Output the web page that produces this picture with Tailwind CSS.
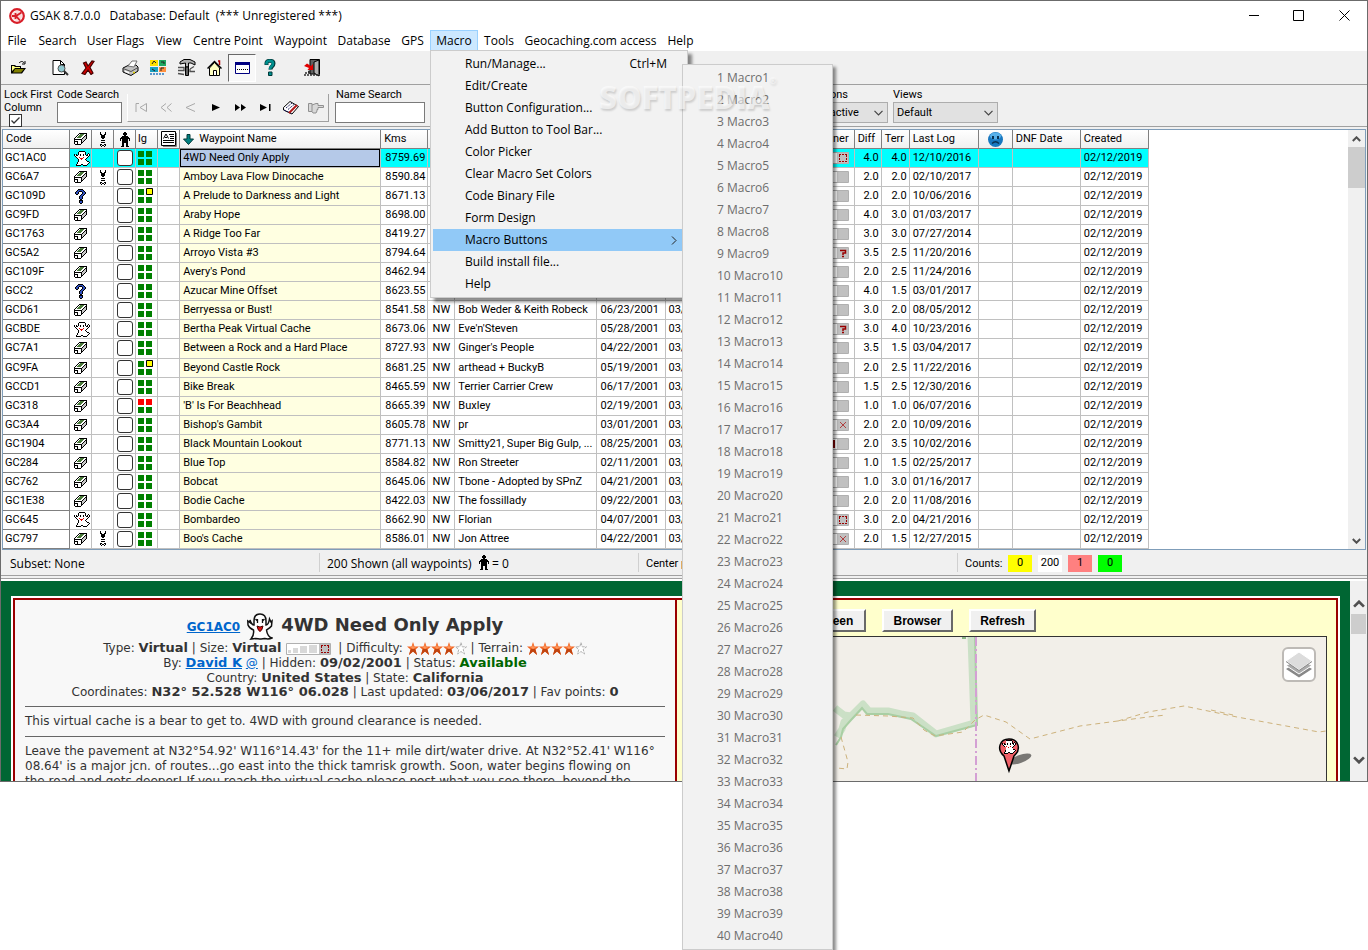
<!DOCTYPE html>
<html lang="en">
<head>
    <meta charset="UTF-8">
    <meta name="viewport" content="width=device-width, initial-scale=1.0">
    <title>GSAK 8.7.0.0</title>
    <script src="https://cdn.jsdelivr.net/npm/@tailwindcss/browser@4"></script>
</head>
<body class="min-h-screen bg-white text-black font-['Open_Sans','Noto_Sans',sans-serif] text-xs">

    <!-- Icon sprite -->
    <svg class="hidden">
        <symbol id="i-box" viewBox="0 0 13 12"></symbol>
        <symbol id="i-ghost" viewBox="0 0 16 15"></symbol>
        <symbol id="i-quest" viewBox="0 0 11 15"></symbol>
        <symbol id="i-bug" viewBox="0 0 6 15"></symbol>
        <symbol id="i-man" viewBox="0 0 10 15"></symbol>
        <symbol id="i-notes" viewBox="0 0 16 16">
            <path d="M2 15.500H15.500V2" fill="none" stroke="#808080"/>
            <path d="M.5 .5H14.500V14.500H.5Z" fill="#fff" stroke="#000"/>
            <path d="M2.500 7.500L5 3L7.500 7.500M4 6.500H6M8 3.500H13M9 5.500H13M9 7.500H13M2 9.500H13M2 11.500H13" fill="none" stroke="#000"/>
        </symbol>
        <symbol id="i-arrow" viewBox="0 0 11 11">
            <path d="M4 .5H7V5H10.500L5.500 10.500L.5 5H4Z" fill="#008080" stroke="#003838"/>
        </symbol>
        <symbol id="i-star" viewBox="0 0 12 13">
            <path d="M6 0L7.500 4.500H12L8.500 7.500L10 13L6 9.500L2 13L3.500 7.500L0 4.500H4.500Z" fill="#f26522"/>
            <path d="M6 6V9.500L2 13L3.500 7.500ZM6 6L8.500 7.500L10 13L6 9.500Z" fill="#c04410"/>
            <path d="M6 2L6.800 5.300L9.500 5.300L6 7L3 5.300H5Z" fill="#ff9a60"/>
        </symbol>
        <symbol id="i-staroff" viewBox="0 0 12 13">
            <path d="M6 .5L7.200 4.800H11.500L8.200 7.500L9.500 12L6 9.500L2.500 12L3.800 7.500L.5 4.800H4.800Z" fill="#fff" stroke="#b0b0b0" stroke-dasharray="3 1"/>
        </symbol>
        <symbol id="i-up" viewBox="0 0 9 6"><path d="M.8 5L4.500 1.300L8.200 5" fill="none" stroke="#505050" stroke-width="2"/></symbol>
        <symbol id="i-down" viewBox="0 0 9 6"><path d="M.8 1L4.500 4.700L8.200 1" fill="none" stroke="#505050" stroke-width="2"/></symbol>
        <symbol id="i-chev" viewBox="0 0 9 6"><path d="M.5 .8L4.500 4.800L8.500 .8" fill="none" stroke="#444" stroke-width="1.200"/></symbol>
    </svg>

    <!-- Application window -->
    <div class="relative border border-[#6b6b6b] bg-[#f0f0f0]">

        <!-- Title bar -->
        <header class="flex items-center h-[29px] bg-white pl-2">
            <svg class="size-4 mr-[5px]" viewBox="0 0 16 16">
                <circle cx="8" cy="8" r="6.800" fill="#fff" stroke="#d81e28" stroke-width="2.200"/>
                <circle cx="8" cy="8" r="5" fill="#f9dada"/>
                <path d="M12.500 4.500L7 8L11 12.500M6.500 5V11M3 8H6" fill="none" stroke="#d81e28" stroke-width="1.800"/>
            </svg>
            <h1 class="whitespace-pre">GSAK 8.7.0.0   Database: Default  (*** Unregistered ***)</h1>
            <div class="ml-auto flex h-full">
                <button aria-label="Minimize" class="w-[45px] flex items-center justify-center"><svg class="w-[11px] h-[11px]" viewBox="0 0 11 11"><path d="M1 5.500H11" stroke="#000"/></svg></button>
                <button aria-label="Maximize" class="w-[45px] flex items-center justify-center"><svg class="w-[11px] h-[11px]" viewBox="0 0 11 11"><path d="M.5 .5H10.500V10.500H.5Z" fill="none" stroke="#000"/></svg></button>
                <button aria-label="Close" class="w-[46px] flex items-center justify-center"><svg class="w-[11px] h-[11px]" viewBox="0 0 11 11"><path d="M.5 .5L10.500 10.500M10.500 .5L.5 10.500" stroke="#000"/></svg></button>
            </div>
        </header>

        <!-- Menu bar -->
        <nav class="flex h-[21px] bg-white leading-[21px] whitespace-nowrap">
            <button class="w-8 text-center">File</button>
            <button class="w-[49px] text-center">Search</button>
            <button class="w-[67px] text-center">User Flags</button>
            <button class="w-[39px] text-center">View</button>
            <button class="w-20 text-center">Centre Point</button>
            <button class="w-[65px] text-center">Waypoint</button>
            <button class="w-[62px] text-center">Database</button>
            <button class="w-[35px] text-center">GPS</button>
            <button class="w-12 text-center bg-[#cce8ff] border border-[#99d1ff] leading-[19px]">Macro</button>
            <button class="w-[42px] text-center">Tools</button>
            <button class="w-[141px] text-center">Geocaching.com access</button>
            <button class="w-[39px] text-center">Help</button>
        </nav>

        <!-- Tool bar -->
        <div class="flex items-center h-[34px] pl-[3px] border-b border-[#a0a0a0]">
            <button aria-label="Open" class="w-7 flex justify-center">
                <svg class="w-[17px] h-[15px]" viewBox="0 0 17 15"><path d="M1 13V5H5L6 6H11V8H16L12 13.500H1Z" fill="#000"/><path d="M2 11V6H4L5 7H10V8H5Z" fill="#ffff80"/><path d="M5 9H14L11 12.500H3Z" fill="#808000"/><path d="M9 3C11 1 13 1 14 3M15 1V4H12" fill="none" stroke="#000"/></svg>
            </button>
            <button aria-label="Search" class="w-7 ml-[14px] flex justify-center">
                <svg class="w-[17px] h-4" viewBox="0 0 17 16"><path d="M1 .5H8.500L12.500 4.500V14.500H1Z" fill="#fff" stroke="#000"/><path d="M8.500 .5V4.500H12.500" fill="none" stroke="#000"/><circle cx="9.500" cy="8.500" r="3.500" fill="#90c8d0" stroke="#505050"/><path d="M12 11L16 15" stroke="#303030" stroke-width="2"/></svg>
            </button>
            <button aria-label="Delete" class="w-7 flex justify-center">
                <svg class="w-[14px] h-[15px]" viewBox="0 0 14 15"><path d="M2.500 3L5 2L7 6L11 1L13 1.500L9 7.500L12 13L10 14.500L7 10L4 14.500L1 13.500L5 8Z" fill="#d00000" stroke="#400" stroke-width="1.200"/></svg>
            </button>
            <button aria-label="Print" class="w-7 ml-[14px] flex justify-center">
                <svg class="w-[17px] h-4" viewBox="0 0 17 16"><path d="M1 8L7 5H14L16 7V11L9 15.500L1 12Z" fill="#c0c0c0" stroke="#000"/><path d="M6 6L10 1H15L12 7Z" fill="#fff" stroke="#707070"/><path d="M1 8.500L9 11.500L16 7.500" fill="none" stroke="#505050"/><path d="M3 10.500L7 12V13.500L3 12Z" fill="#fff"/><path d="M11 12.500H13" stroke="#e0d000" stroke-width="1.500"/></svg>
            </button>
            <button aria-label="Waypoints" class="w-7 flex justify-center">
                <svg class="w-4 h-[15px]" viewBox="0 0 16 15"><path d="M0 0H8V6H0Z" fill="#ffe000"/><path d="M9 0H16V6H9Z" fill="#20a860"/><path d="M0 7H8V12H0Z" fill="#18a0c0"/><path d="M9 7H16V12H9Z" fill="#ff9040"/><path d="M2 4L4 1L6 3M11 2H14V4M2 9L5 11M11 11V8H14" fill="none" stroke="#222"/><path d="M0 14H15" stroke="#2878c0" stroke-width="1.500" stroke-dasharray="2 1"/></svg>
            </button>
            <button aria-label="Settings" class="w-7 flex justify-center">
                <svg class="w-[19px] h-[17px]" viewBox="0 0 19 17"><path d="M3 3L7 .5H13L18 3V6L14 4H11.500V8H8.500V4L3 5Z" fill="#b0b0b0" stroke="#000"/><path d="M8.500 8H11.500V16.500H8.500Z" fill="#606060" stroke="#000"/><path d="M1 8.500H7V11.500H1M13 10L17 7.500M13 10V12.500H18M1 14.500L7 15.500" fill="none" stroke="#505050" stroke-width="1.300"/></svg>
            </button>
            <button aria-label="Home" class="w-7 flex justify-center">
                <svg class="w-[15px] h-4" viewBox="0 0 15 16"><path d="M2.500 8V15.500H12.500V8L7.500 2.500Z" fill="#ffffc0" stroke="#000"/><path d="M.5 8.500L7.500 1.500L14.500 8.500" fill="none" stroke="#000" stroke-width="1.500"/><path d="M11 1H12.500V5" fill="none" stroke="#b00000" stroke-width="1.500"/><path d="M6.500 10.500H9.500V15.500H6.500Z" fill="#fff" stroke="#000"/></svg>
            </button>
            <button aria-label="Split screen" class="w-7 h-7 flex items-center justify-center bg-[#f8f8f8] border border-l-[#696969] border-t-[#696969] border-r-white border-b-white">
                <svg class="w-[15px] h-3" viewBox="0 0 15 12"><path d="M.5 .5H14.500V11.500H.5Z" fill="#fff" stroke="#000080"/><path d="M0 0H15V3H0Z" fill="#000080"/><path d="M2 7.500H13" stroke="#000" stroke-dasharray="1 1"/></svg>
            </button>
            <button aria-label="Help" class="w-7 flex justify-center">
                <svg class="w-3 h-[17px]" viewBox="0 0 12 17"><path d="M2.500 6V4C2.500 1 9.500 1 9.500 4.500C9.500 7.500 6.500 7 6.500 10.500" fill="none" stroke="#003838" stroke-width="4"/><path d="M2.500 5.500V4C2.500 1 9 1 9 4.500C9 7.500 6 7 6 10.500" fill="none" stroke="#009090" stroke-width="2.600"/><path d="M4.500 13H8V16.500H4.500Z" fill="#009090" stroke="#003838"/></svg>
            </button>
            <button aria-label="Exit" class="w-7 ml-[14px] flex justify-center">
                <svg class="w-[18px] h-[18px]" viewBox="0 0 18 18"><path d="M7 .5H16.500V15H7Z" fill="#606060" stroke="#000"/><path d="M11 3L16 1V17L11 14Z" fill="#b0b0b0" stroke="#000"/><path d="M1 7L4 4.500L8 7L10 5V11H4.500L6 9Z" fill="#e00000"/><path d="M1 16H17M2 14H8M5 12.500H8" stroke="#303030" stroke-width="1.500" stroke-dasharray="2 1"/></svg>
            </button>
        </div>

        <!-- Search row -->
        <div class="flex h-[42px] pl-[3px] border-b border-[#a0a0a0] font-['Roboto',sans-serif] text-[11px] leading-[13px]">
            <label class="w-[53px] pt-[3px]">Lock First<br>Column
                <span class="relative block ml-[5px] size-[13px]">
                    <input type="checkbox" checked class="block appearance-none size-[13px] bg-white border border-[#333]">
                    <svg class="absolute top-0 left-0 size-[13px] pointer-events-none" viewBox="0 0 13 13"><path d="M2.500 6.500L5 9L10.500 3.500" fill="none" stroke="#333" stroke-width="1.300"/></svg>
                </span>
            </label>
            <div class="w-[70px]">
                <label for="codeSearch" class="block pt-[3px]">Code Search</label>
                <input id="codeSearch" type="text" class="block mt-[1px] w-[65px] h-[21px] bg-white border border-[#7a7a7a]">
            </div>
            <div class="flex self-start mt-[9px] h-[28px] w-[202px] items-center border-b border-r border-[#a0a0a0] border-l border-l-white">
                <button aria-label="First" class="w-[25px] flex justify-center"><svg class="w-3 h-[9px]" viewBox="0 0 12 9"><path d="M1 9V.5H4M11.500 .5V8.500L5 4.500Z" fill="none" stroke="#a8a8a8"/></svg></button>
                <button aria-label="Back page" class="w-[25px] flex justify-center"><svg class="w-3 h-[9px]" viewBox="0 0 12 9"><path d="M6 .5L1 4.500L6 8.500M11.500 .5L7 4.500L11.500 8.500" fill="none" stroke="#a8a8a8"/></svg></button>
                <button aria-label="Back" class="w-[25px] flex justify-center"><svg class="w-3 h-[9px]" viewBox="0 0 12 9"><path d="M10 .5L1 4.500L10 8.500" fill="none" stroke="#a8a8a8"/></svg></button>
                <button aria-label="Next" class="w-[25px] flex justify-center"><svg class="w-2 h-[7px]" viewBox="0 0 8 7"><path d="M0 0L8 3.500L0 7Z"/></svg></button>
                <button aria-label="Next page" class="w-[25px] flex justify-center"><svg class="w-[11px] h-[7px]" viewBox="0 0 11 7"><path d="M0 0L5 3.500L0 7ZM6 0L11 3.500L6 7Z"/></svg></button>
                <button aria-label="Last" class="w-[25px] flex justify-center"><svg class="w-[11px] h-[7px]" viewBox="0 0 11 7"><path d="M0 0L7 3.500L0 7ZM9 0H10.500V7H9Z"/></svg></button>
                <button aria-label="Bookmark" class="w-[25px] flex justify-center"><svg class="w-4 h-[14px]" viewBox="0 0 16 14"><path d="M.5 6.500L7 .5L15.500 5.500L9 13L.5 9Z" fill="#fff" stroke="#000"/><path d="M3 7L9 2M5 8.500L11 3.500M1 9L9 12.500" stroke="#202060" stroke-dasharray="2 1"/><path d="M6 12L14 4" stroke="#b01818" stroke-width="2"/></svg></button>
                <button aria-label="Go to" class="w-[25px] flex justify-center"><svg class="w-4 h-3" viewBox="0 0 16 12"><path d="M.5 1.500H4V9.500H.5ZM4 3L8 1.500H10V3.500H15.500V5.500H10V7.500H9V9L8 11H5L4 9.500" fill="#d8d8d8" stroke="#909090"/></svg></button>
            </div>
            <div class="w-[94px] ml-[6px]">
                <label for="nameSearch" class="block pt-[3px] pl-px">Name Search</label>
                <input id="nameSearch" type="text" class="block mt-[1px] w-[90px] h-[21px] bg-white border border-[#7a7a7a]">
            </div>
            <div class="ml-[368px] w-24">
                <label for="selections" class="block pt-[3px]">Selections</label>
                <div class="relative w-[91px] mt-[1px]">
                    <select id="selections" class="block appearance-none w-full h-[21px] pl-[3px] bg-[#e1e1e1] border border-[#adadad]"><option>None active</option></select>
                    <svg class="absolute right-[5px] top-2 w-[9px] h-1.5 pointer-events-none"><use href="#i-chev"/></svg>
                </div>
            </div>
            <div>
                <label for="views" class="block pt-[3px]">Views</label>
                <div class="relative w-[105px] mt-[1px]">
                    <select id="views" class="block appearance-none w-full h-[21px] pl-[3px] bg-[#e1e1e1] border border-[#adadad]"><option>Default</option></select>
                    <svg class="absolute right-[5px] top-2 w-[9px] h-1.5 pointer-events-none"><use href="#i-chev"/></svg>
                </div>
            </div>
        </div>

        <!-- Waypoint grid -->
        <div class="flex mt-[2px] mx-px h-[421px] bg-white border border-[#7f9db9] overflow-hidden">
            <table class="table-fixed w-[1146px] shrink-0 border-separate border-spacing-0 font-['Roboto',sans-serif] text-[11px] leading-[18px] whitespace-nowrap">
                <colgroup>
                    <col class="w-[67px]"><col class="w-[22px]"><col class="w-[22px]"><col class="w-[22px]"><col class="w-[22px]"><col class="w-[22px]">
                    <col class="w-[201px]"><col class="w-[47px]"><col class="w-[27px]"><col class="w-[142px]"><col class="w-[68px]"><col class="w-[68px]">
                    <col class="w-[121px]"><col class="w-[27px]"><col class="w-[28px]"><col class="w-[69px]"><col class="w-[34px]"><col class="w-[68px]"><col class="w-[68px]">
                </colgroup>
                <thead>
                    <tr class="h-[19px] text-left *:p-0 *:font-normal *:border-b *:border-r *:border-[#808080] *:bg-linear-to-b *:from-white *:to-[#f0f0f0] *:leading-[18px]">
                        <th><span class="pl-[3px]">Code</span></th>
                        <th aria-label="Type"><svg class="mx-auto w-[13px] h-3"><use href="#i-box"/></svg></th>
                        <th aria-label="Travel bug"><svg class="mx-auto w-1.5 h-[15px]"><use href="#i-bug"/></svg></th>
                        <th aria-label="User flag"><svg class="mx-auto w-[10px] h-[15px]"><use href="#i-man"/></svg></th>
                        <th><span class="pl-0.5">lg</span></th>
                        <th aria-label="Notes"><svg class="mx-auto size-4"><use href="#i-notes"/></svg></th>
                        <th><span class="flex items-center gap-[5px] pl-[3px]"><svg class="size-[11px]"><use href="#i-arrow"/></svg>Waypoint Name</span></th>
                        <th><span class="pl-[3px]">Kms</span></th>
                        <th></th><th></th><th></th><th></th>
                        <th><span class="block text-right pr-[5px]">Container</span></th>
                        <th><span class="pl-[3px]">Diff</span></th>
                        <th><span class="pl-[3px]">Terr</span></th>
                        <th><span class="pl-[3px]">Last Log</span></th>
                        <th aria-label="DNF"><svg class="mx-auto size-[15px]" viewBox="0 0 15 15"><circle cx="7.500" cy="7.500" r="7.500" fill="#1878c0"/><ellipse cx="7.500" cy="4" rx="5.500" ry="3.500" fill="#58b0e8"/><path d="M4 4H6V7H4ZM9 4H11V7H9Z" fill="#083050"/><path d="M4 11.500Q7.500 8 11 11.500" fill="none" stroke="#083050" stroke-width="1.300"/></svg></th>
                        <th><span class="pl-[3px]">DNF Date</span></th>
                        <th><span class="pl-[3px]">Created</span></th>
                    </tr>
                </thead>
                <tbody id="waypoints"></tbody>
            </table>
            <div class="ml-auto w-[17px] flex flex-col bg-[#f0f0f0]">
                <button aria-label="Scroll up" class="h-[17px] flex items-center justify-center"><svg class="w-[9px] h-1.5"><use href="#i-up"/></svg></button>
                <div class="h-[41px] bg-[#cdcdcd]"></div>
                <button aria-label="Scroll down" class="mt-auto h-[17px] flex items-center justify-center"><svg class="w-[9px] h-1.5"><use href="#i-down"/></svg></button>
            </div>
        </div>

        <!-- Status bar -->
        <div class="flex h-[26px] py-[3px] border-b border-[#a0a0a0] leading-[22px] whitespace-nowrap">
            <div class="w-[319px] pl-[9px] border-r border-[#d0d0d0]">Subset: None</div>
            <div class="w-[319px] pl-[7px] border-r border-[#d0d0d0] flex leading-[22px]"><span class="w-[152px]">200 Shown (all waypoints)</span><svg class="w-[10px] h-[15px] mt-0.5"><use href="#i-man"/></svg><span class="ml-[3px]">= 0</span></div>
            <div class="w-[319px] pl-[7px] border-r border-[#d0d0d0] leading-[22px] font-['Roboto',sans-serif] text-[11px]">Center point</div>
            <div class="flex pl-[7px] pt-0.5 font-['Roboto',sans-serif] text-[11px] leading-[18px]">
                <span class="w-[43px]">Counts:</span>
                <span class="w-6 h-[17px] leading-4 text-center bg-[#ffff00]">0</span>
                <span class="w-6 h-[17px] leading-4 text-center ml-1.5 bg-white">200</span>
                <span class="w-6 h-[17px] leading-4 text-center ml-1.5 bg-[#ff8080]">1</span>
                <span class="w-6 h-[17px] leading-4 text-center ml-1.5 bg-[#00ff00]">0</span>
            </div>
        </div>
        <div class="h-[3px] mt-0.5 bg-white border-t border-[#a0a0a0]"></div>

        <!-- Split screen detail pane -->
        <div class="flex h-[200px] overflow-hidden font-['DejaVu_Sans',sans-serif] text-[#333]">
            <div class="flex-1 min-w-0 bg-[#006633] pt-[15px] px-[10px]">
                <div class="flex border-2 border-b-0 border-white h-full">
                    <article class="w-[664px] shrink-0 bg-[#f8f8f8] border-2 border-b-0 border-[#990000] px-[10px] pt-[9px] text-xs leading-[15px] whitespace-nowrap">
                        <div class="text-center [&_b]:text-[13px] [&_b]:leading-[14px]">
                            <h2 class="flex items-center justify-center h-8 text-[18px] leading-8 font-bold">
                                <a href="#" class="text-xs text-[#0066cc] underline mt-1">GC1AC0</a>
                                <svg class="w-[26px] h-[27px] ml-[7px] mr-2 mt-0.5" viewBox="0 0 26 27">
                                    <path d="M7 8C7 3 9 1 13 1S19 3 19 8L19 12C21 12 22 9 22.500 6L24 9L25 8L24.500 13C23 15 21 16 19.500 17C20 21 22 24 25 25C22 26.500 20 26 17.500 25.500C14 26.500 11 25.500 8.500 25.500L4 26C6.500 23 7 20 6.500 17C4 16 2 14.500 1 12L.8 8L3 9.500V7C4 10 5 12 7 12Z" fill="#fff" stroke="#111" stroke-width="1.500"/>
                                    <path d="M10.500 6V10M15.500 6V10M8.500 6L10.500 8M17.500 6L15.500 8" stroke="#111" stroke-width="1.300"/>
                                    <path d="M10 13Q13 15 16 13Q15 18 13 18.500Q11 18 10 13Z" fill="#e01010" stroke="#400"/>
                                </svg>4WD Need Only Apply
                            </h2>
                            <p class="flex items-center justify-center h-[15px]">
                                <span>Type: <b>Virtual</b> | Size: <b>Virtual</b></span>
                                <svg class="w-[45px] h-3 mx-1" viewBox="0 0 45 12"><path d="M.5 .5H44.500V11.500H.5Z" fill="#fff" stroke="#b0b0b0"/><path d="M2 7H5V10H2ZM7 5H12V10H7ZM14 3H21V10H14ZM23 2H31V10H23Z" fill="#d8d8d8"/><path d="M33 1H44V11H33Z" fill="#c0c0c0"/><path d="M35 2.500H43M35 9.500H43M35.500 3V9M42.500 3V9" fill="none" stroke="#990000" stroke-dasharray="2 1"/></svg>
                                <span>&nbsp;| Difficulty:&nbsp;</span>
                                <svg class="w-3 h-[13px]"><use href="#i-star"/></svg><svg class="w-3 h-[13px]"><use href="#i-star"/></svg><svg class="w-3 h-[13px]"><use href="#i-star"/></svg><svg class="w-3 h-[13px]"><use href="#i-star"/></svg><svg class="w-3 h-[13px]"><use href="#i-staroff"/></svg>
                                <span>&nbsp;| Terrain:&nbsp;</span>
                                <svg class="w-3 h-[13px]"><use href="#i-star"/></svg><svg class="w-3 h-[13px]"><use href="#i-star"/></svg><svg class="w-3 h-[13px]"><use href="#i-star"/></svg><svg class="w-3 h-[13px]"><use href="#i-star"/></svg><svg class="w-3 h-[13px]"><use href="#i-staroff"/></svg>
                            </p>
                            <p>By: <a href="#" class="text-[#0066cc] underline"><b>David K</b></a> <a href="#" class="text-[#0066cc] underline">@</a> | Hidden: <b>09/02/2001</b> | Status: <b class="text-[#006600]">Available</b></p>
                            <p class="leading-[14px]">Country: <b>United States</b> | State: <b>California</b></p>
                            <p>Coordinates: <b>N32° 52.528 W116° 06.028</b> | Last updated: <b>03/06/2017</b> | Fav points: <b>0</b></p>
                        </div>
                        <p class="mt-1.5 py-[7px] border-t border-[#666]">This virtual cache is a bear to get to. 4WD with ground clearance is needed.</p>
                        <p class="py-[7px] border-t border-[#666]">Leave the pavement at N32°54.92' W116°14.43' for the 11+ mile dirt/water drive. At N32°52.41' W116°<br>08.64' is a major jcn. of routes...go east into the thick tamrisk growth. Soon, water begins flowing on<br>the road and gets deeper! If you reach the virtual cache please post what you see there, beyond the</p>
                    </article>
                    <section class="flex-1 min-w-0 bg-[#ffffcc] border-t-2 border-r-2 border-[#990000] px-[9px] pt-[9px]">
                        <div class="flex justify-end gap-4 pr-[291px] font-['Liberation_Sans',sans-serif] font-bold text-xs text-black">
                            <button class="w-[90px] h-[23px] text-center bg-[#f0f0f0] border-2 border-t-white border-l-white border-b-[#696969] border-r-[#696969]">Full Screen</button>
                            <button class="w-[71px] h-[23px] text-center bg-[#f0f0f0] border-2 border-t-white border-l-white border-b-[#696969] border-r-[#696969]">Browser</button>
                            <button class="w-[67px] h-[23px] text-center bg-[#f0f0f0] border-2 border-t-white border-l-white border-b-[#696969] border-r-[#696969]">Refresh</button>
                        </div>
                        <div class="relative mt-1 h-[160px] bg-[#f2efe9] border border-[#333] overflow-hidden">
                            <svg class="absolute top-0 right-0 w-[493px] h-[145px]" viewBox="0 0 493 145" fill="none">
                                <path d="M138 0L141 86L103 97L80 79L68 77L55 74L36 74L30 67L18 79L11 78L2 71M18 79L11 85L9 92L4 100" stroke="#cbe0c6" stroke-width="7" stroke-linejoin="round"/>
                                <path d="M142 0L144 88L103 99L78 82L55 77L34 77L29 71L18 83L10 92L8 100L3 108" stroke="#a9cfa4" stroke-width="2"/>
                                <path d="M143 0V145" stroke="#d4a0d4" stroke-width="2" stroke-dasharray="9 3 2 3"/>
                                <path d="M23 78L55 79L80 81L91 93L102 99L130 95L142 83L151 78L173 85L197 102L247 89L315 80L333 78M285 84L315 75L351 69L404 80L486 95L493 94M8 100L15 125L14 132L4 131M378 73L400 78" stroke="#cdb27c" stroke-dasharray="5 4"/>
                                <path d="M129 1H133" stroke="#208020"/>
                                <ellipse cx="187" cy="122" rx="12" ry="4" transform="rotate(-20 187 122)" fill="#000" opacity=".5"/>
                                <path d="M176 134L171 119C163 112 167 102 176 102S189 112 181 119Z" fill="#f06068" stroke="#000" stroke-width="1.500"/>
                                <svg x="169" y="103" width="14" height="14"><use href="#i-ghost"/></svg>
                            </svg>
                            <button aria-label="Layers" class="absolute top-[10px] right-[10px] w-[34px] h-[35px] flex items-center justify-center bg-white border-2 border-[#bdbab6] rounded-md">
                                <svg class="w-[26px] h-[26px]" viewBox="0 0 26 26"><path d="M0 17L13 25.500L26 17L21 14H5Z" fill="#888"/><path d="M0 13.500L13 22L26 13.500L21 11H5Z" fill="#aaa" stroke="#fff"/><path d="M0 9L13 18L26 9L13 0Z" fill="#dcdcdc" stroke="#fff"/><path d="M0 9.500L13 18.500L26 9.500" fill="none" stroke="#888"/></svg>
                            </button>
                        </div>
                    </section>
                </div>
            </div>
            <div class="w-[17px] flex flex-col bg-[#f0f0f0] pt-3 pb-3">
                <button aria-label="Scroll up" class="h-[21px] flex items-center justify-center"><svg class="w-3 h-2"><use href="#i-up"/></svg></button>
                <div class="h-5 mx-px bg-[#cdcdcd]"></div>
                <button aria-label="Scroll down" class="mt-auto h-[18px] flex items-center justify-center"><svg class="w-3 h-2"><use href="#i-down"/></svg></button>
            </div>
        </div>

        <!-- Macro menu -->
        <ul class="absolute left-[429px] top-[49px] w-[258px] p-0.5 bg-[#f2f2f2] border border-[#ccc] shadow-[4px_4px_3px_rgba(0,0,0,0.45)] leading-[22px]">
            <li><button class="flex w-full pl-8 pr-[18px] justify-between">Run/Manage...<span>Ctrl+M</span></button></li>
            <li><button class="w-full pl-8 text-left">Edit/Create</button></li>
            <li><button class="w-full pl-8 text-left">Button Configuration...</button></li>
            <li><button class="w-full pl-8 text-left">Add Button to Tool Bar...</button></li>
            <li><button class="w-full pl-8 text-left">Color Picker</button></li>
            <li><button class="w-full pl-8 text-left">Clear Macro Set Colors</button></li>
            <li><button class="w-full pl-8 text-left">Code Binary File</button></li>
            <li><button class="w-full pl-8 text-left">Form Design</button></li>
            <li><button class="flex w-full items-center pl-8 pr-2 justify-between bg-[#91c9f7]">Macro Buttons<svg class="w-[6px] h-[9px]" viewBox="0 0 6 9"><path d="M1 .5L5 4.500L1 8.500" fill="none" stroke="#222"/></svg></button></li>
            <li><button class="w-full pl-8 text-left">Build install file...</button></li>
            <li><button class="w-full pl-8 text-left">Help</button></li>
        </ul>

        <!-- Macro Buttons submenu -->
        <ul id="macroButtons" class="absolute left-[681px] top-[63px] w-[151px] p-0.5 bg-[#f2f2f2] border border-[#ccc] shadow-[3px_3px_3px_rgba(0,0,0,0.45)] leading-[22px] text-[#6d6d6d]"></ul>

        <!-- Watermark -->
        <div class="absolute left-[598px] top-[76px] text-[31px] leading-10 font-extrabold text-white/60 [text-shadow:1px_2px_2px_rgba(0,0,0,0.15)] pointer-events-none">SOFTPEDIA<sup class="text-[9px] font-normal align-top leading-4">®</sup></div>
    </div>

    <script>
        // Pixel icons, one character per pixel
        const palette = { "#": "#000", o: "#fff", g: "#4a7a3a", s: "#c8c8c8", b: "#3050c0", r: "#e00000" };
        const pixels = {
            "i-box": [
                ".....########",
                "....#oggggoo#",
                "...#oggggoo##",
                "..#oggggoo#s#",
                ".#oggggoo#ss#",
                "#ooooooo#sss#",
                "########sss#.",
                "#oooooo#ss#..",
                "####ooo#s#...",
                "#oo#ooo##....",
                "#oo#ooo#.....",
                ".######......",
            ],
            "i-ghost": [
                ".....######.....",
                "....#oooooo#....",
                "....#oooooo#..#.",
                "#.#.#o#oo#o#.#o#",
                "#o##oo#oo#oo##o#",
                ".#oooooooooooo#.",
                "..#oorooorooo#..",
                "...#oorrrooo#...",
                "....#oorooo#....",
                "....#ooooooo#...",
                "....#oooooooo##.",
                "...#ooooooooooo#",
                "...#oooooooooo#.",
                "..#oooo##oooo#..",
                "..#####..####...",
            ],
            "i-quest": [
                "...#####...",
                "..#bbbbb#..",
                ".#bb###bb#.",
                "#bb#...#bb#",
                "#bb#...#bb#",
                ".##...#bb#.",
                ".....#bb#..",
                "....#bb#...",
                "....#bb#...",
                "....#bb#...",
                ".....##....",
                "....####...",
                "....#bb#...",
                "....#bb#...",
                ".....##....",
            ],
            "i-bug": [
                "#....#",
                "#....#",
                "##..##",
                ".####.",
                ".####.",
                ".####.",
                "..##..",
                "......",
                ".####.",
                "......",
                ".####.",
                "......",
                "##..##",
                "#.##.#",
                ".#..#.",
            ],
            "i-man": [
                "....##....",
                "...####...",
                "...####...",
                "....##....",
                "..######..",
                ".########.",
                "##########",
                "#.######.#",
                "#.######.#",
                "..######..",
                "..######..",
                "..##..##..",
                "..##..##..",
                "..##..##..",
                ".###..###.",
            ],
        };
        for (const id in pixels) {
            let out = "";
            pixels[id].forEach((row, y) => [...row].forEach((c, x) => {
                if (palette[c]) out += `<rect x="${x}" y="${y}" width="1" height="1" fill="${palette[c]}" shape-rendering="crispEdges"/>`;
            }));
            document.getElementById(id).innerHTML = out;
        }

        // code, type, bug, logs, name, kms, placed by, hidden, container, diff, terr, last log
        const waypoints = [
            ["GC1AC0", "ghost", 0, "", "4WD Need Only Apply", "8759.69", "", "", "v", "4.0", "4.0", "12/10/2016"],
            ["GC6A7", "box", 1, "", "Amboy Lava Flow Dinocache", "8590.84", "", "", "", "2.0", "2.0", "02/10/2017"],
            ["GC109D", "quest", 0, "y", "A Prelude to Darkness and Light", "8671.13", "", "", "", "2.0", "2.0", "10/06/2016"],
            ["GC9FD", "box", 0, "", "Araby Hope", "8698.00", "", "", "", "4.0", "3.0", "01/03/2017"],
            ["GC1763", "box", 0, "", "A Ridge Too Far", "8419.27", "", "", "", "3.0", "3.0", "07/27/2014"],
            ["GC5A2", "box", 0, "", "Arroyo Vista #3", "8794.64", "", "", "?", "3.5", "2.5", "11/20/2016"],
            ["GC109F", "box", 0, "", "Avery's Pond", "8462.94", "", "", "", "2.0", "2.5", "11/24/2016"],
            ["GCC2", "quest", 0, "", "Azucar Mine Offset", "8623.55", "", "", "", "4.0", "1.5", "03/01/2017"],
            ["GCD61", "box", 0, "", "Berryessa or Bust!", "8541.58", "Bob Weder & Keith Robeck", "06/23/2001", "", "3.0", "2.0", "08/05/2012"],
            ["GCBDE", "ghost", 0, "", "Bertha Peak Virtual Cache", "8673.06", "Eve'n'Steven", "05/28/2001", "?", "3.0", "4.0", "10/23/2016"],
            ["GC7A1", "box", 0, "", "Between a Rock and a Hard Place", "8727.93", "Ginger's People", "04/22/2001", "", "3.5", "1.5", "03/04/2017"],
            ["GC9FA", "box", 0, "y", "Beyond Castle Rock", "8681.25", "arthead + BuckyB", "05/19/2001", "", "2.0", "2.5", "11/22/2016"],
            ["GCCD1", "box", 0, "", "Bike Break", "8465.59", "Terrier Carrier Crew", "06/17/2001", "", "1.5", "2.5", "12/30/2016"],
            ["GC318", "box", 0, "r", "'B' Is For Beachhead", "8665.39", "Buxley", "02/19/2001", "", "1.0", "1.0", "06/07/2016"],
            ["GC3A4", "box", 0, "", "Bishop's Gambit", "8605.78", "pr", "03/01/2001", "x", "2.0", "2.0", "10/09/2016"],
            ["GC1904", "box", 0, "", "Black Mountain Lookout", "8771.13", "Smitty21, Super Big Gulp, ...", "08/25/2001", "l", "2.0", "3.5", "10/02/2016"],
            ["GC284", "box", 0, "", "Blue Top", "8584.82", "Ron Streeter", "02/11/2001", "", "1.0", "1.5", "02/25/2017"],
            ["GC762", "box", 0, "", "Bobcat", "8645.06", "Tbone - Adopted by SPnZ", "04/21/2001", "", "1.0", "3.0", "01/16/2017"],
            ["GC1E38", "box", 0, "", "Bodie Cache", "8422.03", "The fossillady", "09/22/2001", "", "2.0", "2.0", "11/08/2016"],
            ["GC645", "ghost", 0, "", "Bombardeo", "8662.90", "Florian", "04/07/2001", "v", "3.0", "2.0", "04/21/2016"],
            ["GC797", "box", 1, "", "Boo's Cache", "8586.01", "Jon Attree", "04/22/2001", "x", "2.0", "1.5", "12/27/2015"],
        ];

        const icons = {
            box: `<svg class="mx-auto w-[13px] h-3"><use href="#i-box"/></svg>`,
            ghost: `<svg class="ml-1 w-4 h-[15px]"><use href="#i-ghost"/></svg>`,
            quest: `<svg class="mx-auto w-[11px] h-[15px]"><use href="#i-quest"/></svg>`,
            bug: `<svg class="mx-auto w-1.5 h-[15px]"><use href="#i-bug"/></svg>`,
        };

        // Four last-log squares, the top pair can be marked
        function logs(state) {
            const top = state === "r" ? "#ff0000" : "#008000";
            const second = state === "y"
                ? `<path d="M8.500 -.5H14.500V5.500H8.500Z" fill="#ffff00" stroke="#000"/>`
                : `<path d="M8 0H14V6H8Z" fill="${top}"/>`;
            return `<svg class="ml-0.5 w-[14px] h-[14px] overflow-visible" viewBox="0 0 14 14"><path d="M0 0H6V6H0Z" fill="${top}"/>${second}<path d="M0 8H6V14H0ZM8 8H14V14H8Z" fill="#008000"/></svg>`;
        }

        // Container size bar, drawn against the right side of its cell
        function container(size) {
            const marks = {
                "v": `<path d="M35 2.500H43M35 9.500H43M35.500 3V9M42.500 3V9" fill="none" stroke="#990000" stroke-dasharray="2 1"/>`,
                "?": `<path d="M36 3.500H41.500V6H39V8M38 9.500H40" fill="none" stroke="#990000" stroke-width="1.500"/>`,
                "x": `<path d="M36 3L42 9M42 3L36 9" stroke="#b04040"/>`,
                "l": `<path d="M23 2H31V10H23Z" fill="#800000"/>`,
            };
            return `<svg class="ml-auto mr-[5px] w-[45px] h-3" viewBox="0 0 45 12"><path d="M.5 .5H44.500V11.500H.5Z" fill="#fff" stroke="#b0b0b0"/><path d="M33 1H44V11H33Z" fill="#c0c0c0"/>${marks[size] || ""}</svg>`;
        }

        document.getElementById("waypoints").innerHTML = waypoints.map((w, i) => `
            <tr class="h-[19px] *:p-0 *:border-b *:border-r *:border-[#c0c0c0] ${i === 0 ? "bg-[#00ffff]" : "bg-white"}">
                <td class="bg-white border-[#808080]!"><span class="block h-[18px] leading-[17px] pl-0.5">${w[0]}</span></td>
                <td>${icons[w[1]]}</td>
                <td>${w[2] ? icons.bug : ""}</td>
                <td><input type="checkbox" aria-label="User flag ${w[0]}" class="block mx-auto appearance-none size-4 bg-white border border-[#333] rounded-[3px]"></td>
                <td>${logs(w[3])}</td>
                <td></td>
                <td class="${i === 0 ? "bg-[#b5c9e8]" : "bg-[#ffffe1]"}"><span class="block pl-[3px] ${i === 0 ? "border border-dotted border-black outline outline-black -outline-offset-1 pl-0.5! leading-4" : ""}">${w[4]}</span></td>
                <td class="text-right"><span class="pr-0.5">${w[5]}</span></td>
                <td class="text-center">NW</td>
                <td><span class="pl-[3px]">${w[6]}</span></td>
                <td><span class="pl-[3px]">${w[7]}</span></td>
                <td><span class="pl-[3px]">03/06/2017</span></td>
                <td>${container(w[8])}</td>
                <td class="text-right"><span class="pr-0.5">${w[9]}</span></td>
                <td class="text-right"><span class="pr-0.5">${w[10]}</span></td>
                <td><span class="pl-[3px]">${w[11]}</span></td>
                <td></td>
                <td></td>
                <td><span class="pl-[3px]">02/12/2019</span></td>
            </tr>`).join("");

        document.getElementById("macroButtons").innerHTML = Array.from({ length: 40 }, (_, i) =>
            `<li><button disabled class="w-full pl-8 text-left">${i + 1} Macro${i + 1}</button></li>`
        ).join("");
    </script>

</body>
</html>
